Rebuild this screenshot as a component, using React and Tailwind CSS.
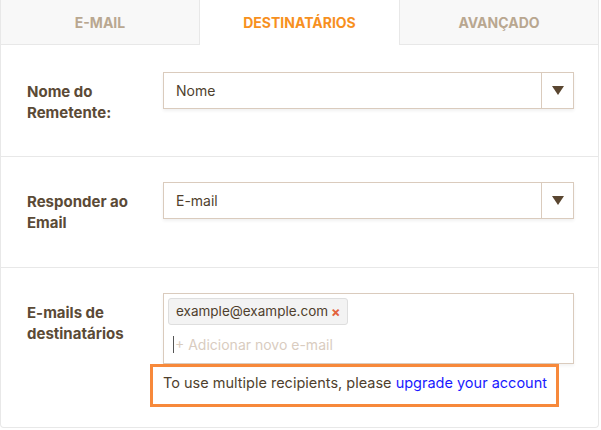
import React from "react";

function Select({ value }) {
  return (
    <div className="flex h-[37px] w-[411px] border border-[#dacbbd] bg-white shadow-[0_2px_3px_rgba(0,0,0,0.06)]">
      <div className="flex flex-1 items-center pl-[12px] text-[14px] text-[#4f3f2d]">{value}</div>
      <div className="flex w-[32px] items-center justify-center border-l border-[#dacbbd]">
        <svg width="12" height="9" viewBox="0 0 12 9">
          <path d="M0 0 H12 L6 9 Z" fill="#5a4630" />
        </svg>
      </div>
    </div>
  );
}

function Label({ children }) {
  return (
    <div className="w-[136px] shrink-0 pt-[9px] text-[15px] font-bold leading-[21px] text-[#5b4a36]">
      {children}
    </div>
  );
}

export default function App() {
  return (
    <div className="h-[430px] w-[601px] bg-white" style={{ fontFamily: "Inter, 'Noto Sans', sans-serif" }}>
      <div className="flex h-[428px] w-[599px] flex-col rounded-b-[4px] border-x border-b border-[#e8e8e8]">
        <div className="flex h-[45px]">
          <div className="flex w-[199px] items-center justify-center border-r border-b border-[#e8e8e8] bg-[#f8f8f8] text-[14px] font-bold text-[#b9a790]">
            E-MAIL
          </div>
          <div className="flex w-[199px] items-center justify-center bg-white text-[14px] font-bold text-[#f7901e]">
            DESTINATÁRIOS
          </div>
          <div className="flex flex-1 items-center justify-center border-l border-b border-[#e8e8e8] bg-[#f8f8f8] text-[14px] font-bold text-[#b9a790]">
            AVANÇADO
          </div>
        </div>

        <div className="flex h-[111px] pl-[26px] pt-[27px]">
          <Label>
            Nome do
            <br />
            Remetente:
          </Label>
          <Select value="Nome" />
        </div>

        <div className="flex h-[111px] border-t border-[#e8e8e8] pl-[26px] pt-[25px]">
          <Label>
            Responder ao
            <br />
            Email
          </Label>
          <Select value="E-mail" />
        </div>

        <div className="flex flex-1 border-t border-[#e8e8e8] pl-[26px] pt-[25px]">
          <Label>
            E-mails de
            <br />
            destinatários
          </Label>
          <div className="flex flex-col">
            <div className="flex h-[71px] w-[411px] flex-col border border-[#dacbbd] bg-white px-[4px] pt-[4px] shadow-[0_2px_3px_rgba(0,0,0,0.05)]">
              <div className="flex h-[27px] w-fit items-center gap-[3px] rounded-[3px] border border-[#dedede] bg-[#f3f3f3] pl-[7px] pr-[6px] text-[13.5px] text-[#4f3f2d]">
                example@example.com
                <span className="text-[14px] font-bold text-[#e2623c]">×</span>
              </div>
              <div className="mt-[9px] flex items-center pl-[5px] text-[14px] text-[#d9ccbf]">
                <span className="mr-[1px] inline-block h-[17px] w-px bg-[#555]"></span>
                + Adicionar novo e-mail
              </div>
            </div>
            <div className="-ml-[13px] flex h-[43px] w-[409px] items-center border-[3px] border-[#f7893b] pb-[5px] pl-[10px] text-[14.5px] text-[#4f3f2d]">
              To use multiple recipients, please&nbsp;
              <span className="text-[#1a1aff]">upgrade your account</span>
            </div>
          </div>
        </div>
      </div>
    </div>
  );
}
